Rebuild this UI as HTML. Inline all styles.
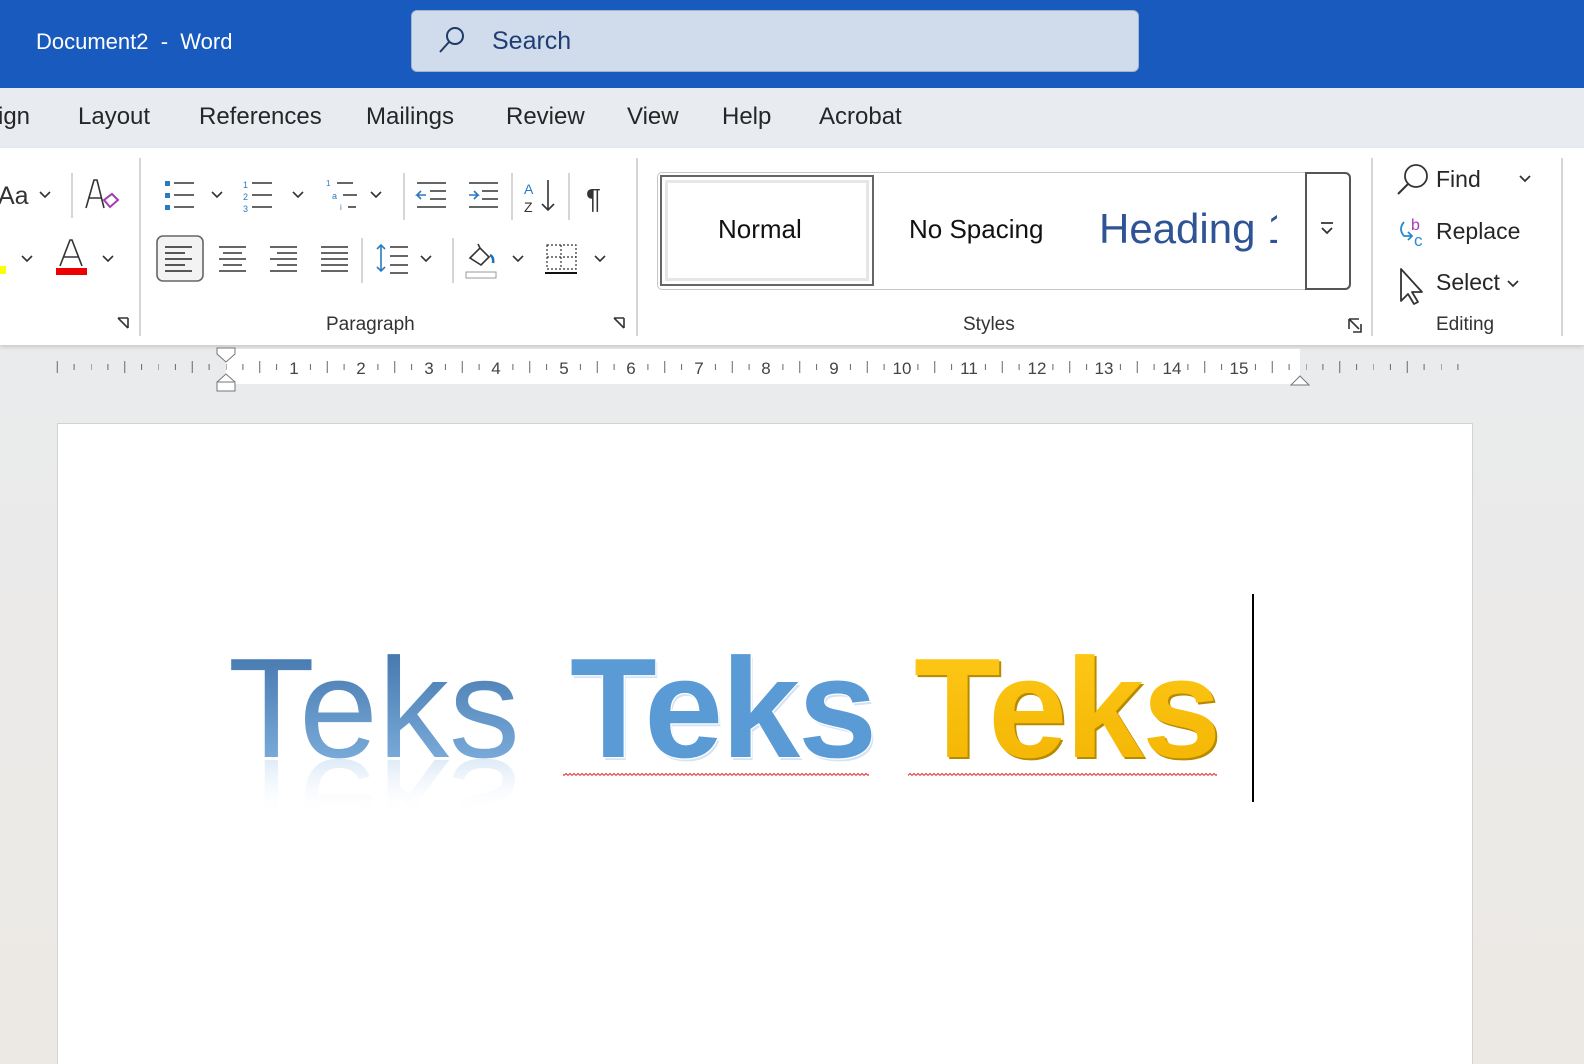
<!DOCTYPE html>
<html style="overflow:hidden;width:1584px;height:1064px"><head><meta charset="utf-8"><style>
*{margin:0;padding:0;box-sizing:border-box}
body{width:1584px;height:1064px;overflow:hidden;position:relative;font-family:"Liberation Sans",sans-serif;background:linear-gradient(#e9ecf0,#ece9e4);}
.a{position:absolute;white-space:nowrap}
#title{left:0;top:0;width:1584px;height:88px;background:#185abd}
#tabs{left:0;top:88px;width:1584px;height:60px;background:#e8ecf1}
#rib{left:0;top:148px;width:1584px;height:197px;background:#fff;box-shadow:0 2px 4px rgba(0,0,0,.15)}
.tab{top:103px;font-size:24px;color:#262626}
.sep{width:2px;background:#d6d6d6}
.lbl{top:314px;font-size:19px;color:#333}
.page{left:57px;top:423px;width:1416px;height:641px;background:#fff;border:1px solid #d3d3d3;border-bottom:none}
</style></head><body>
<div class="a" id="title"></div>
<div class="a" style="left:36px;top:29px;font-size:22px;color:#fff">Document2&nbsp; - &nbsp;Word</div>
<div class="a" style="left:411px;top:10px;width:728px;height:62px;background:#d0dcec;border:1px solid #a3b4cb;border-radius:6px"></div>
<svg class="a" style="left:436px;top:24px" width="32" height="32" viewBox="0 0 32 32"><circle cx="19" cy="12" r="8" fill="none" stroke="#1f3a66" stroke-width="2"/><line x1="13" y1="18" x2="4" y2="28" stroke="#1f3a66" stroke-width="2"/></svg>
<div class="a" style="left:492px;top:27px;font-size:25px;color:#1f3f73">Search</div>
<div class="a" id="tabs"></div>
<div class="a tab" style="left:-2px">ign</div>
<div class="a tab" style="left:78px">Layout</div>
<div class="a tab" style="left:199px">References</div>
<div class="a tab" style="left:366px">Mailings</div>
<div class="a tab" style="left:506px">Review</div>
<div class="a tab" style="left:627px">View</div>
<div class="a tab" style="left:722px">Help</div>
<div class="a tab" style="left:819px">Acrobat</div>
<div class="a" id="rib"></div>
<div class="a sep" style="left:139px;top:158px;height:178px"></div>
<div class="a sep" style="left:636px;top:158px;height:178px"></div>
<div class="a sep" style="left:1371px;top:158px;height:178px"></div>
<div class="a sep" style="left:1561px;top:158px;height:178px"></div>
<div class="a" style="left:-2px;top:182px;font-size:25px;color:#333">Aa</div>
<svg class="a" style="left:0;top:150px" width="640" height="190" viewBox="0 150 640 190" fill="none" stroke="#333" stroke-width="1.6">
<path d="M40 192l5 5 5-5"/>
<line x1="72" y1="173" x2="72" y2="218" stroke="#ccc"/>
<path d="M86 208l8-28h3l7 28M89 198h12" /><path d="M104 200l8-6 6 6-8 7z" stroke="#a33db3" stroke-width="2"/>
<rect x="0" y="266" width="6" height="8" fill="#ff0" stroke="none"/><path d="M22 256l5 5 5-5"/>
<path d="M60 266l10-26h2l10 26M64 257h14"/><rect x="56" y="268" width="31" height="7" fill="#e00" stroke="none"/><path d="M103 256l5 5 5-5"/>
<path d="M118 318h10M128 318v10M118 318l10 10" />
<rect x="165" y="181" width="5" height="5" fill="#2a7ac0" stroke="none"/><rect x="165" y="193" width="5" height="5" fill="#2a7ac0" stroke="none"/><rect x="165" y="205" width="5" height="5" fill="#2a7ac0" stroke="none"/>
<path d="M174 183h20M174 195h20M174 207h20"/><path d="M212 192l5 5 5-5"/>
<text x="243" y="188" font-size="9" fill="#2a7ac0" stroke="none">1</text><text x="243" y="200" font-size="9" fill="#2a7ac0" stroke="none">2</text><text x="243" y="212" font-size="9" fill="#2a7ac0" stroke="none">3</text>
<path d="M252 183h20M252 195h20M252 207h20"/><path d="M293 192l5 5 5-5"/>
<text x="326" y="186" font-size="8" fill="#2a7ac0" stroke="none">1</text><text x="332" y="199" font-size="9" fill="#2a7ac0" stroke="none">a</text><text x="340" y="210" font-size="8" fill="#2a7ac0" stroke="none">i</text>
<path d="M337 183h16M343 195h14M348 207h8"/><path d="M371 192l5 5 5-5"/>
<line x1="404" y1="173" x2="404" y2="220" stroke="#ccc"/>
<path d="M417 183h29M430 191h16M430 199h16M417 207h29"/><path d="M426 195h-9l4-4M417 195l4 4" stroke="#2a7ac0"/>
<path d="M469 183h29M482 191h16M482 199h16M469 207h29"/><path d="M469 195h9l-4-4M478 195l-4 4" stroke="#2a7ac0"/>
<line x1="512" y1="173" x2="512" y2="220" stroke="#ccc"/>
<text x="524" y="194" font-size="14" fill="#2a7ac0" stroke="none">A</text><text x="524" y="212" font-size="14" fill="#333" stroke="none">Z</text><path d="M548 180v30M542 204l6 6 6-6"/>
<line x1="569" y1="173" x2="569" y2="220" stroke="#ccc"/>
<text x="586" y="208" font-size="28" fill="#333" stroke="none">¶</text>
<rect x="157" y="236" width="46" height="45" rx="6" fill="#f3f3f3" stroke="#666"/>
<path d="M165 247h27M165 253h20M165 259h27M165 265h20M165 271h27" stroke="#222"/>
<path d="M219 247h27M223 253h19M219 259h27M223 265h19M219 271h27"/>
<path d="M270 247h27M277 253h20M270 259h27M277 265h20M270 271h27"/>
<path d="M321 247h27M321 253h27M321 259h27M321 265h27M321 271h27"/>
<line x1="362" y1="238" x2="362" y2="283" stroke="#ccc"/>
<path d="M390 247h18M390 256h18M390 265h18M390 273h18"/><path d="M381 245v26M377 249l4-4 4 4M377 267l4 4 4-4" stroke="#2a7ac0"/><path d="M421 256l5 5 5-5"/>
<line x1="453" y1="238" x2="453" y2="283" stroke="#ccc"/>
<path d="M470 258l10-10 9 9-8 8zM480 248l-2-4" /><path d="M490 255q4 2 3 8" stroke="#1f6db5" stroke-width="2.5"/><rect x="466" y="272" width="30" height="6" stroke="#999" stroke-width="1"/><path d="M513 256l5 5 5-5"/>
<rect x="547" y="245" width="29" height="24" stroke-dasharray="2 2" stroke-width="1.2"/><path d="M561 245v24M547 257h29" stroke-dasharray="2 2" stroke-width="1.2"/><path d="M545 273h32" stroke="#111" stroke-width="2"/><path d="M595 256l5 5 5-5"/>
<path d="M614 318h10M624 318v10M614 318l10 10"/>
</svg>
<div class="a lbl" style="left:326px">Paragraph</div>
<div class="a lbl" style="left:963px">Styles</div>
<div class="a lbl" style="left:1436px">Editing</div>
<div class="a" style="left:657px;top:172px;width:694px;height:118px;border:1.5px solid #c6c6c6;border-radius:5px;background:#fff"></div>
<div class="a" style="left:660px;top:175px;width:214px;height:111px;border:2px solid #666;"><div style="position:absolute;inset:3px;border:3px solid #e6e6e6"></div></div>
<div class="a" style="left:718px;top:214px;font-size:26px;color:#111">Normal</div>
<div class="a" style="left:909px;top:214px;font-size:26px;color:#111">No Spacing</div>
<div class="a" style="left:1099px;top:205px;font-size:42px;color:#2f5496;width:178px;overflow:hidden">Heading 1</div>
<div class="a" style="left:1305px;top:172px;width:46px;height:118px;border:2px solid #555;border-radius:0 6px 6px 0;background:#fff"></div>
<svg class="a" style="left:1318px;top:220px" width="20" height="20"><path d="M3 3h12M4 8l5 5 5-5" stroke="#333" stroke-width="1.8" fill="none"/></svg>
<svg class="a" style="left:1345px;top:316px" width="20" height="20"><path d="M4 3h10M4 3v10M14 13L4 3M8 16h8v-8" stroke="#333" stroke-width="1.6" fill="none"/></svg>
<svg class="a" style="left:1394px;top:160px" width="150" height="150" fill="none">
<circle cx="22" cy="16" r="11" stroke="#333" stroke-width="1.8"/><path d="M14 24L4 34" stroke="#333" stroke-width="2"/>
<path d="M126 16l5 5 5-5" stroke="#333" stroke-width="1.8"/>
<text x="17" y="70" font-size="16" fill="#a33db3" font-family="Liberation Sans">b</text><text x="20" y="86" font-size="17" fill="#2a8ad0" font-family="Liberation Sans">c</text>
<path d="M10 62q-6 7 0 14l8 0M14 72l4 4-4 4" stroke="#2a8ad0" stroke-width="1.8"/>
<path d="M7 109v32l7-7 6 10 4-2-6-10h10z" stroke="#333" stroke-width="1.8" stroke-linejoin="round"/>
<path d="M114 121l5 5 5-5" stroke="#333" stroke-width="1.8"/>
</svg>
<div class="a" style="left:1436px;top:166px;font-size:23px;color:#262626">Find</div>
<div class="a" style="left:1436px;top:218px;font-size:23px;color:#262626">Replace</div>
<div class="a" style="left:1436px;top:269px;font-size:23px;color:#262626">Select</div>
<div class="a" style="left:226px;top:349px;width:1074px;height:35px;background:#fff"></div>
<svg class="a" style="left:0;top:345px" width="1584" height="48">
<defs><pattern id="tk" x="226" y="0" width="67.5" height="48" patternUnits="userSpaceOnUse">
<line x1="16.9" y1="19" x2="16.9" y2="25" stroke="#666" stroke-width="1"/>
<line x1="33.75" y1="16" x2="33.75" y2="28" stroke="#666" stroke-width="1"/>
<line x1="50.6" y1="19" x2="50.6" y2="25" stroke="#666" stroke-width="1"/>
<line x1="0" y1="19" x2="0" y2="25" stroke="#666" stroke-width="1"/>
</pattern></defs>
<rect x="56" y="0" width="1410" height="48" fill="url(#tk)"/>
<g font-size="17" fill="#444" text-anchor="middle" font-family="Liberation Sans">
<rect x="286" y="12" width="16" height="22" fill="#fff"/><text x="294" y="29">1</text>
<rect x="353" y="12" width="16" height="22" fill="#fff"/><text x="361" y="29">2</text>
<rect x="420" y="12" width="16" height="22" fill="#fff"/><text x="429" y="29">3</text>
<rect x="488" y="12" width="16" height="22" fill="#fff"/><text x="496" y="29">4</text>
<rect x="555" y="12" width="16" height="22" fill="#fff"/><text x="564" y="29">5</text>
<rect x="623" y="12" width="16" height="22" fill="#fff"/><text x="631" y="29">6</text>
<rect x="690" y="12" width="16" height="22" fill="#fff"/><text x="699" y="29">7</text>
<rect x="758" y="12" width="16" height="22" fill="#fff"/><text x="766" y="29">8</text>
<rect x="825" y="12" width="16" height="22" fill="#fff"/><text x="834" y="29">9</text>
<rect x="888" y="12" width="28" height="22" fill="#fff"/><text x="902" y="29">10</text>
<rect x="955" y="12" width="28" height="22" fill="#fff"/><text x="969" y="29">11</text>
<rect x="1023" y="12" width="28" height="22" fill="#fff"/><text x="1037" y="29">12</text>
<rect x="1090" y="12" width="28" height="22" fill="#fff"/><text x="1104" y="29">13</text>
<rect x="1158" y="12" width="28" height="22" fill="#fff"/><text x="1172" y="29">14</text>
<rect x="1225" y="12" width="28" height="22" fill="#fff"/><text x="1239" y="29">15</text>
</g>
<path d="M217 3h18v6l-9 8-9-8z" fill="#fff" stroke="#777"/>
<path d="M217 37l9-8 9 8v9h-18z" fill="#fff" stroke="#777"/><line x1="217" y1="37" x2="235" y2="37" stroke="#777"/>
<path d="M1291 40l9-9 9 9z" fill="#fff" stroke="#777"/>
</svg>
<div class="a page"></div>
<svg class="a" style="left:200px;top:590px" width="1100" height="300">
<defs>
<linearGradient id="g1" x1="0" y1="0" x2="0" y2="1"><stop offset="0" stop-color="#3b6ea5"/><stop offset="1" stop-color="#86b7e4"/></linearGradient>
<linearGradient id="g2" x1="0" y1="0" x2="0" y2="1"><stop offset=".45" stop-color="#fff" stop-opacity="0"/><stop offset="1" stop-color="#9cc2e8" stop-opacity=".8"/></linearGradient>
<linearGradient id="g3" x1="0" y1="0" x2="0" y2="1"><stop offset="0" stop-color="#ffca1a"/><stop offset="1" stop-color="#f2b300"/></linearGradient>
<pattern id="sq" x="0" y="182" width="4" height="5" patternUnits="userSpaceOnUse"><path d="M0 3.5l2-2 2 2" fill="none" stroke="#e03030" stroke-width="1"/></pattern>
</defs>
<g font-family="Liberation Sans" font-size="142">
<text x="28" y="167" fill="url(#g1)">Teks</text>
<text x="28" y="-170" transform="scale(1,-1)" fill="url(#g2)">Teks</text>
<text x="372" y="170" fill="#d3e3f3" font-weight="bold" letter-spacing="-2">Teks</text>
<text x="370" y="167" fill="#5b9bd5" stroke="#fff" stroke-width="2.5" paint-order="stroke" font-weight="bold" letter-spacing="-2">Teks</text>
<text x="716" y="169" fill="#b88a00" font-weight="bold" letter-spacing="-2">Teks</text>
<text x="714" y="167" fill="url(#g3)" font-weight="bold" letter-spacing="-2">Teks</text>
</g>
<rect x="363" y="182" width="306" height="5" fill="url(#sq)"/>
<rect x="708" y="182" width="309" height="5" fill="url(#sq)"/>
<line x1="1053" y1="4" x2="1053" y2="212" stroke="#000" stroke-width="2"/>
</svg>
</body></html>
